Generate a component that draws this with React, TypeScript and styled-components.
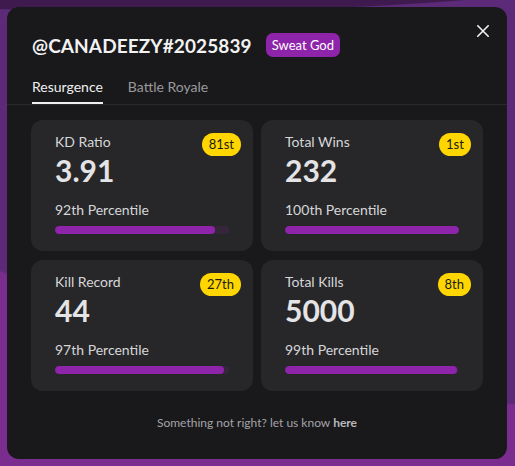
import React from "react";
import styled, { createGlobalStyle } from "styled-components";

const Global = createGlobalStyle`
  html, body { margin: 0; padding: 0; }
  body {
    width: 515px;
    height: 466px;
    overflow: hidden;
    font-family: Lato, "Noto Sans", sans-serif;
    background:
      radial-gradient(ellipse 500px 51px at 150px -39px, #3e1a4f 98%, transparent 100%),
      radial-gradient(ellipse 1015px 514px at 700px -100px, #5c2a79 99.6%, transparent 100%),
      #7a2c8f;
  }
`;

const Stage = styled.div`
  padding: 7px 8px 7px 7px;
`;

const Modal = styled.div`
  position: relative;
  width: 500px;
  height: 452px;
  box-sizing: border-box;
  background: #19191b;
  border-radius: 12px;
  display: flex;
  flex-direction: column;
`;

const Header = styled.div`
  display: flex;
  align-items: center;
  gap: 14px;
  padding: 26px 25px 0 25px;
  height: 24px;
`;

const Title = styled.h1`
  margin: 0;
  font-size: 19px;
  font-weight: 700;
  color: #f2f2f2;
  letter-spacing: 0.1px;
`;

const Tag = styled.span`
  background: #8e24aa;
  color: #fff;
  font-size: 13px;
  padding: 3px 6px;
  border-radius: 7px;
  line-height: 18px;
`;

const Close = styled.button`
  position: absolute;
  top: 17px;
  right: 17px;
  width: 14px;
  height: 14px;
  padding: 0;
  border: none;
  background: none;
  display: flex;
  align-items: center;
  justify-content: center;
  cursor: pointer;
`;

const Tabs = styled.div`
  display: flex;
  gap: 25px;
  padding: 0 25px;
  margin-top: 20px;
  border-bottom: 1px solid #2a2a2d;
`;

const Tab = styled.div<{ $active?: boolean }>`
  font-size: 14px;
  line-height: 20px;
  padding-bottom: 5px;
  color: ${(p) => (p.$active ? "#f0f0f0" : "#9a9a9e")};
  border-bottom: 2px solid ${(p) => (p.$active ? "#f0f0f0" : "transparent")};
`;

const Grid = styled.div`
  display: grid;
  grid-template-columns: 222px 222px;
  grid-auto-rows: 131px;
  gap: 9px 8px;
  padding: 15px 24px 0 24px;
`;

const Card = styled.div`
  position: relative;
  background: #27272a;
  border-radius: 12px;
  padding: 12px 24px 0 24px;
  display: flex;
  flex-direction: column;
`;

const Label = styled.div`
  font-size: 14px;
  line-height: 20px;
  color: #d6d6d8;
`;

const Value = styled.div`
  font-size: 30px;
  font-weight: 700;
  line-height: 36px;
  color: #e4e4e6;
`;

const Pct = styled.div`
  margin-top: 12px;
  font-size: 14px;
  line-height: 20px;
  color: #d6d6d8;
`;

const Track = styled.div`
  margin-top: 6px;
  height: 8px;
  width: 174px;
  border-radius: 4px;
  background: #35263c;
  overflow: hidden;
`;

const Fill = styled.div`
  height: 100%;
  border-radius: 4px;
  background: #8e24aa;
`;

const Rank = styled.span`
  position: absolute;
  top: 13px;
  right: 12px;
  background: #ffd600;
  color: #1a1a1a;
  font-size: 13px;
  line-height: 23px;
  padding: 0 7px;
  border-radius: 12px;
  min-width: 18px;
  text-align: center;
`;

const Footer = styled.div`
  margin-top: auto;
  padding-bottom: 29px;
  text-align: center;
  font-size: 12px;
  color: #a4a4a8;
  b { font-weight: 700; color: #b8b8bc; }
`;

const stats = [
  { label: "KD Ratio", value: "3.91", pct: 92, rank: "81st" },
  { label: "Total Wins", value: "232", pct: 100, rank: "1st" },
  { label: "Kill Record", value: "44", pct: 97, rank: "27th" },
  { label: "Total Kills", value: "5000", pct: 99, rank: "8th" },
];

export default function App() {
  return (
    <>
      <Global />
      <Stage>
        <Modal>
          <Header>
            <Title>@CANADEEZY#2025839</Title>
            <Tag>Sweat God</Tag>
          </Header>
          <Close aria-label="close">
            <svg width="12" height="12" viewBox="0 0 12 12">
              <path d="M0.8 0.8L11.2 11.2M11.2 0.8L0.8 11.2" stroke="#f2f2f2" strokeWidth="1.6" strokeLinecap="round" />
            </svg>
          </Close>
          <Tabs>
            <Tab $active>Resurgence</Tab>
            <Tab>Battle Royale</Tab>
          </Tabs>
          <Grid>
            {stats.map((s) => (
              <Card key={s.label}>
                <Label>{s.label}</Label>
                <Value>{s.value}</Value>
                <Pct>{s.pct}th Percentile</Pct>
                <Track>
                  <Fill style={{ width: `${s.pct}%` }} />
                </Track>
                <Rank>{s.rank}</Rank>
              </Card>
            ))}
          </Grid>
          <Footer>
            Something not right? let us know <b>here</b>
          </Footer>
        </Modal>
      </Stage>
    </>
  );
}
